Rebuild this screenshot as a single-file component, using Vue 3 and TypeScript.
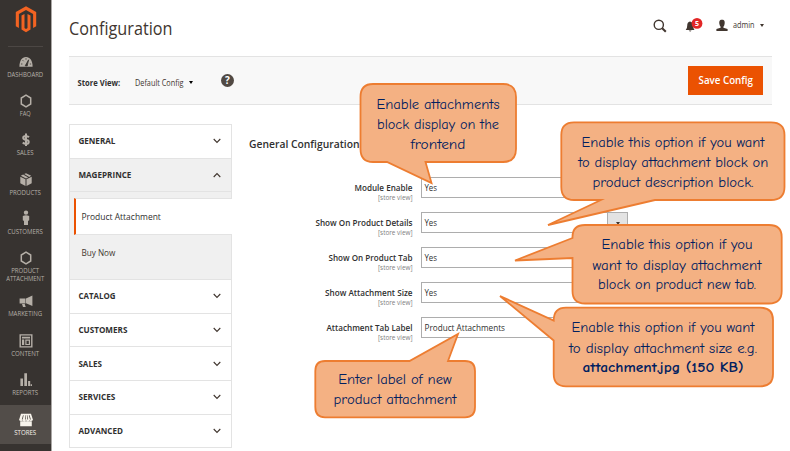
<script setup lang="ts">
interface MenuItem { icon: string; lines: { text: string; w: number }[]; h: number; active?: boolean }
interface Line { text: string; x: number; y: number; w: number; bold?: boolean }
interface Callout { path: string; lines: Line[] }

const menu: MenuItem[] = [
  { icon: 'dashboard', lines: [{ text: 'DASHBOARD', w: 36 }], h: 39.5 },
  { icon: 'hexagon', lines: [{ text: 'FAQ', w: 11 }], h: 39.3 },
  { icon: 'dollar', lines: [{ text: 'SALES', w: 17 }], h: 39.4 },
  { icon: 'box', lines: [{ text: 'PRODUCTS', w: 31.5 }], h: 39.4 },
  { icon: 'person', lines: [{ text: 'CUSTOMERS', w: 35.5 }], h: 39.4 },
  { icon: 'hexagon', lines: [{ text: 'PRODUCT', w: 28 }, { text: 'ATTACHMENT', w: 38 }], h: 43 },
  { icon: 'horn', lines: [{ text: 'MARKETING', w: 34 }], h: 39.5 },
  { icon: 'content', lines: [{ text: 'CONTENT', w: 28 }], h: 39.5 },
  { icon: 'bars', lines: [{ text: 'REPORTS', w: 26 }], h: 39.5 },
  { icon: 'store', lines: [{ text: 'STORES', w: 22 }], h: 39, active: true },
]

const topTabs = [
  { text: 'GENERAL', w: 37, open: false },
  { text: 'MAGEPRINCE', w: 53, open: true },
]
const bottomTabs = [
  { text: 'CATALOG', w: 37 },
  { text: 'CUSTOMERS', w: 49 },
  { text: 'SALES', w: 23.5 },
  { text: 'SERVICES', w: 37 },
  { text: 'ADVANCED', w: 44.5 },
]

const fields = [
  { label: 'Module Enable', w: 58, value: 'Yes', vw: 12.5, select: true },
  { label: 'Show On Product Details', w: 97, value: 'Yes', vw: 12.5, select: true },
  { label: 'Show On Product Tab', w: 84, value: 'Yes', vw: 12.5, select: true },
  { label: 'Show Attachment Size', w: 87.5, value: 'Yes', vw: 12.5, select: true },
  { label: 'Attachment Tab Label', w: 86, value: 'Product Attachments', vw: 80.5, select: false },
]

const callouts: Callout[] = [
  {
    path: 'M373 84H503Q516 84 516 97V149Q516 162 503 162H425.5L431.5 183L387 162H373Q360.5 162 360.5 149V97Q360.5 84 373 84Z',
    lines: [
      { text: 'Enable attachments', x: 438, y: 109, w: 123 },
      { text: 'block display on the', x: 438, y: 129, w: 122 },
      { text: 'frontend', x: 438, y: 149, w: 55 },
    ],
  },
  {
    path: 'M574 122.3H771Q784.5 122.3 784.5 135V187Q784.5 200 771 200H655L548 225L601 200H574Q561.3 200 561.3 187V135Q561.3 122.3 574 122.3Z',
    lines: [
      { text: 'Enable this option if you want', x: 673, y: 147, w: 183 },
      { text: 'to display attachment block on', x: 673.3, y: 167, w: 190 },
      { text: 'product description block.', x: 673, y: 187, w: 161 },
    ],
  },
  {
    path: 'M585 225H769Q781.7 225 781.7 237V291Q781.7 303.5 769 303.5H585Q572.5 303.5 572.5 291V258L515 260.5L572.5 238V237Q572.5 225 585 225Z',
    lines: [
      { text: 'Enable this option if you', x: 677, y: 249, w: 151 },
      { text: 'want to display attachment', x: 677, y: 269.7, w: 169 },
      { text: 'block on product new tab.', x: 677, y: 289, w: 158 },
    ],
  },
  {
    path: 'M566 307.7H760Q773 307.7 773 320V374Q773 386.3 760 386.3H566Q553.7 386.3 553.7 374V340.5L500 296L553.7 320.5Q553.7 307.7 566 307.7Z',
    lines: [
      { text: 'Enable this option if you want', x: 663, y: 332.3, w: 183 },
      { text: 'to display attachment size e.g.', x: 663, y: 353, w: 188 },
      { text: 'attachment.jpg (150 KB)', x: 663, y: 372, w: 161, bold: true },
    ],
  },
  {
    path: 'M325 361H409.5L458 334L448 361H465Q475 361 475 371V407Q475 417.3 465 417.3H325Q315.3 417.3 315.3 407V371Q315.3 361 325 361Z',
    lines: [
      { text: 'Enter label of new', x: 395, y: 384, w: 113.5 },
      { text: 'product attachment', x: 395, y: 404, w: 123 },
    ],
  },
]
</script>

<template>
  <div class="page">
    <aside class="sidebar">
      <div class="brand">
        <svg width="22" height="27" viewBox="0 0 22 27">
          <path fill="#f26322" d="M11 0.2L21.2 6.1V20.2L18.1 22V8L11 4L3.9 8V22L.8 20.2V6.1Z" />
          <path fill="#f26322" d="M6.5 9.6L9.5 7.9V22L11 22.9L12.5 22V7.9L15.5 9.6V23.5L11 26.2L6.5 23.5Z" />
        </svg>
      </div>
      <div v-for="(m, i) in menu" :key="i" class="item" :class="{ active: m.active }" :style="{ height: m.h + 'px' }">
        <svg class="ico" width="16" height="16" viewBox="0 0 16 16" fill="currentColor">
          <template v-if="m.icon === 'dashboard'">
            <path d="M1.4 12.8C1.4 6.6 4 3 8 3C12 3 14.6 6.6 14.6 12.8Z" />
            <path d="M7.2 11.8L10.6 5.8L9.2 12ZM3 10h1.4M4.6 6.2l1 1M8 4.2v1.5M11.8 10h1.3" stroke="#373330" stroke-width=".8" fill="#373330" />
          </template>
          <path v-else-if="m.icon === 'hexagon'" d="M8 2.2L12.7 5V11L8 13.8L3.3 11V5Z" fill="none" stroke="currentColor" stroke-width="1.5" />
          <path v-else-if="m.icon === 'dollar'" d="M10.9 5.3Q9.7 4 8 4C4.3 4 4.3 7.2 8 7.7C11.7 8.2 11.6 11.8 8 11.8Q6 11.8 4.8 10.5M8 1.6V14" fill="none" stroke="currentColor" stroke-width="2" />
          <template v-else-if="m.icon === 'box'">
            <path d="M2.3 4.7L7.5 7.3V14L2.3 11.2ZM8.5 7.3L13.7 4.7V11.2L8.5 14Z" />
            <path d="M2.8 3.8L5.1 2.6L10.2 5.4L8 6.5ZM6.2 2.1L8 1.3L13.2 3.8L11.2 4.9Z" />
          </template>
          <path v-else-if="m.icon === 'person'" d="M8 -.6a2.2 2.2 0 1 1 0 4.4a2.2 2.2 0 0 1 0-4.4M4.8 4.9Q8 3.7 11.2 4.9V9.2L10 10V14H6V10L4.8 9.2Z" />
          <path v-else-if="m.icon === 'horn'" d="M1.6 5.6H7.5V10.5H1.6ZM8 5.6L14.4 2.5V13L8 10.3ZM4 11H6.7L7.7 13.9H5Z" />
          <path v-else-if="m.icon === 'content'" fill-rule="evenodd" d="M1.5 1.2H14.5V14.6H1.5ZM2.9 2.6V13.2H13.1V2.6ZM4 3.7H12V5.6H4ZM4 6.6H6.2V12.1H4ZM7.3 6.6H12V12.1H7.3ZM8.5 7.8V10.9H10.8V7.8Z" />
          <path v-else-if="m.icon === 'bars'" d="M2.4 6.5H5V14H2.4ZM6.3 1.3H9V14H6.3ZM10.1 9H12.2V14H10.1ZM12.7 12.2H14V14H12.7Z" />
          <path v-else fill-rule="evenodd" d="M3 1.8H13L15 8Q13.4 9.8 11.7 8.5Q10 10 8 8.5Q6.3 10 4.3 8.5Q2.5 9.8 1 8ZM5 3.2L3.8 7.5H4.7L5.7 3.2ZM7.3 3.2L7 7.5H7.8V3.2ZM8.8 3.2L9.3 7.5H10.1L9.4 3.2ZM10.8 3.2L12 7.5H12.9L11.6 3.2ZM2.2 9.3H13.8V14.2H2.2Z" />
        </svg>
        <svg class="cap" width="50" :height="m.lines.length * 8.5" :viewBox="`0 0 50 ${m.lines.length * 8.5}`">
          <text v-for="(l, k) in m.lines" :key="k" x="25.2" :y="6.6 + k * 8.2" text-anchor="middle" :textLength="l.w" lengthAdjust="spacingAndGlyphs">{{ l.text }}</text>
        </svg>
      </div>
    </aside>

    <main class="main">
      <header class="header">
        <svg width="110" height="30" class="t-title"><text x="0" y="22.3" textLength="103.5" lengthAdjust="spacingAndGlyphs">Configuration</text></svg>
        <div class="tools">
          <svg class="search" width="14" height="14" viewBox="0 0 14 14" fill="none" stroke="#41362f"><circle cx="5.8" cy="5.8" r="4.6" stroke-width="1.4" /><path d="M9.2 9.2L12.8 12.8" stroke-width="2" /></svg>
          <svg class="bell" width="18" height="17" viewBox="0 0 18 17">
            <path fill="#41362f" d="M.7 13.9Q2.2 12.7 2.2 9.7Q2.2 6 5 5.5Q8 6 8 9.7Q8.2 12.7 9.5 13.9ZM3.7 14.5H6.6Q5.2 16.4 3.7 14.5Z" />
            <circle cx="12" cy="7.4" r="5.4" fill="#e22626" />
            <text x="12" y="10" text-anchor="middle" class="count">5</text>
          </svg>
          <svg class="user" width="12" height="12" viewBox="0 0 12 12"><path fill="#41362f" d="M6 -.3C8.7 -.3 9 1.8 8.6 4Q8.2 6 7.4 6.8V7.7L11.6 9.1V11H.4V9.1L4.6 7.7V6.8Q3.8 6 3.4 4C3 1.8 3.3 -.3 6 -.3Z" /></svg>
          <svg width="22" height="14" class="t-small"><text x="0" y="9.2" textLength="21.5" lengthAdjust="spacingAndGlyphs">admin</text></svg>
          <i class="caret"></i>
        </div>
      </header>

      <section class="toolbar">
        <svg width="43" height="14" class="t-strong"><text x="-0.4" y="10.8" textLength="42.5" lengthAdjust="spacingAndGlyphs">Store View:</text></svg>
        <svg width="49" height="14" class="t-small config"><text x="0" y="10.8" textLength="48.5" lengthAdjust="spacingAndGlyphs">Default Config</text></svg>
        <i class="caret dark"></i>
        <span class="help">?</span>
        <button class="save"><svg width="56" height="18"><text x="0.5" y="12.1" textLength="54.5" lengthAdjust="spacingAndGlyphs">Save Config</text></svg></button>
      </section>

      <div class="columns">
        <nav class="tabs">
          <div v-for="t in topTabs" :key="t.text" class="tab" :class="{ open: t.open }">
            <svg width="60" height="14" class="t-tab"><text x="-0.6" y="10" :textLength="t.w" lengthAdjust="spacingAndGlyphs">{{ t.text }}</text></svg>
            <svg class="chev" :class="{ up: t.open }" width="8" height="6" viewBox="0 0 8 6"><path d="M.7 1L4 4.4L7.3 1" /></svg>
          </div>
          <div class="sub">
            <div class="subitem current"><svg width="84" height="14" class="t-sub"><text x="-0.6" y="9.8" textLength="79.5" lengthAdjust="spacingAndGlyphs">Product Attachment</text></svg></div>
            <div class="subitem"><svg width="50" height="14" class="t-sub"><text x="-0.6" y="9.8" textLength="34" lengthAdjust="spacingAndGlyphs">Buy Now</text></svg></div>
          </div>
          <div v-for="t in bottomTabs" :key="t.text" class="tab">
            <svg width="60" height="14" class="t-tab"><text x="-0.6" y="10" :textLength="t.w" lengthAdjust="spacingAndGlyphs">{{ t.text }}</text></svg>
            <svg class="chev" width="8" height="6" viewBox="0 0 8 6"><path d="M.7 1L4 4.4L7.3 1" /></svg>
          </div>
        </nav>

        <section class="form">
          <svg width="120" height="16" class="t-head"><text x="0" y="11.9" textLength="110.5" lengthAdjust="spacingAndGlyphs">General Configuration</text></svg>
          <div class="rows">
            <div v-for="f in fields" :key="f.label" class="row">
              <svg class="label" width="110" height="26">
                <text class="name" :x="109.5 - f.w" y="13.8" :textLength="f.w" lengthAdjust="spacingAndGlyphs">{{ f.label }}</text>
                <text class="scope" x="75" y="22.7" textLength="34.5" lengthAdjust="spacingAndGlyphs">[store view]</text>
              </svg>
              <div class="control">
                <svg width="90" height="14" class="t-value"><text x="-0.5" y="10.8" :textLength="f.vw" lengthAdjust="spacingAndGlyphs">{{ f.value }}</text></svg>
                <span v-if="f.select" class="drop"><i class="caret"></i></span>
              </div>
            </div>
          </div>
        </section>
      </div>
    </main>

    <svg class="callouts" width="790" height="451" viewBox="0 0 790 451">
      <g v-for="(c, i) in callouts" :key="i">
        <path :d="c.path" fill="#f4b183" stroke="#ed7d31" stroke-width="1.8" stroke-miterlimit="6" />
        <text v-for="l in c.lines" :key="l.text" :class="{ bold: l.bold }" :x="l.x" :y="l.y" text-anchor="middle" :textLength="l.w" lengthAdjust="spacingAndGlyphs">{{ l.text }}</text>
      </g>
    </svg>
  </div>
</template>

<style>
body { margin: 0; background: #fff; overflow: hidden; }
</style>

<style scoped>
* { box-sizing: border-box; }
svg { display: block; flex: none; overflow: visible; }
.page { position: relative; width: 790px; height: 451px; display: flex; overflow: hidden; font-family: "Open Sans", sans-serif; color: #41362f; background: #fff; }
.sidebar { width: 51.5px; height: 451px; flex: none; background: #373330; border-right: 1px solid #aaa7a5; }
.brand { height: 46.5px; margin: 0 8px; padding: 5.5px 0 0 7px; border-bottom: 1.5px solid #4c4744; }
.item { display: flex; flex-direction: column; align-items: center; padding-top: 7px; color: #b5afa7; }
.item.active { background: #524d49; color: #f7f3eb; }
.ico { margin-left: 0.6px; }
.cap text { font-size: 6.9px; fill: currentColor; }
.main { flex: none; width: 720.5px; padding-left: 17.5px; }
.header { width: 703px; height: 56px; display: flex; justify-content: space-between; padding-top: 12.5px; }
.t-title text { font-size: 18px; fill: #41362f; }
.tools { display: flex; align-items: center; height: 26px; padding-right: 8.5px; }
.bell { margin-left: 18px; margin-top: -3px; }
.user { margin-left: 13px; }
.user + svg { margin-left: 5px; }
.count { font-size: 7px; font-weight: 700; fill: #fff; }
.t-small text { font-size: 8.8px; fill: #41362f; }
.t-value text { font-size: 8.8px; fill: #303030; }
.caret { width: 0; height: 0; border: 2.5px solid transparent; border-top: 3px solid #41362f; border-bottom: 0; margin-left: 5px; }
.caret.dark { border-top-color: #000; margin: 4px 0 0 5px; }
.toolbar { width: 703px; height: 49px; background: #f8f8f8; border-top: 1px solid #e3e3e3; border-bottom: 1px solid #e3e3e3; display: flex; align-items: center; padding: 0 9px 0 8.5px; }
.t-strong, .config { margin-top: 3px; }
.t-strong text { font-size: 8.5px; font-weight: 700; fill: #303030; }
.config { margin-left: 14.5px; }
.help { width: 13px; height: 13px; margin: 0 0 0 28px; border-radius: 50%; background: #514943; color: #fff; font: 700 10px/13px "Open Sans", sans-serif; text-align: center; }
.save { width: 75px; height: 29px; margin-left: auto; padding: 0; border: 0; background: #eb5202; display: flex; align-items: center; justify-content: center; }
.save text { font: 600 10.7px "Open Sans", sans-serif; fill: #fff; }
.columns { display: flex; padding-top: 19px; }
.tabs { width: 162.5px; flex: none; border: 1px solid #e3e3e3; border-bottom: 0; }
.tab { height: 33.7px; display: flex; align-items: center; justify-content: space-between; padding: 0 10px 0 8.5px; border-bottom: 1px solid #e3e3e3; }
.tab.open { background: #f0f0f0; }
.t-tab text { font-size: 8.8px; font-weight: 700; fill: #303030; }
.chev path { fill: none; stroke: #41362f; stroke-width: 1.1; }
.chev.up { transform: rotate(180deg); }
.sub { height: 87.5px; background: #f0f0f0; padding: 6px 0 0 3.5px; border-bottom: 1px solid #e3e3e3; }
.subitem { height: 36.5px; display: flex; align-items: center; padding-left: 8px; }
.subitem.current { background: #fff; border-left: 2px solid #eb5202; padding-left: 6px; margin-right: -1px; border-top: 1px solid #e3e3e3; border-bottom: 1px solid #e3e3e3; }
.t-sub text { font-size: 8.8px; fill: #41362f; }
.current text { font-weight: 500; fill: #303030; }
.form { padding: 11.5px 0 0 17.7px; }
.t-head text { font-size: 10.8px; font-weight: 600; fill: #303030; }
.rows { display: grid; gap: 14px; padding: 25px 0 0 53.8px; }
.row { display: flex; gap: 8.5px; height: 21px; }
.name { font-size: 8.8px; font-weight: 600; fill: #303030; }
.scope { font-size: 6.8px; fill: #808080; }
.control { width: 207px; height: 21px; border: 1px solid #adadad; display: flex; align-items: center; justify-content: space-between; padding-left: 2.5px; }
.drop { width: 20px; height: 19px; background: #e3e3e3; border-left: 1px solid #adadad; display: flex; align-items: center; justify-content: center; }
.drop .caret { margin: 3px 0 0; }
.callouts { position: absolute; left: 0; top: 0; }
.callouts text { font-family: "Comic Sans MS", "Comic Neue", "Comic Relief", "Open Sans", sans-serif; font-size: 13.8px; fill: #002060; }
.callouts .bold { font-weight: 700; }
</style>
